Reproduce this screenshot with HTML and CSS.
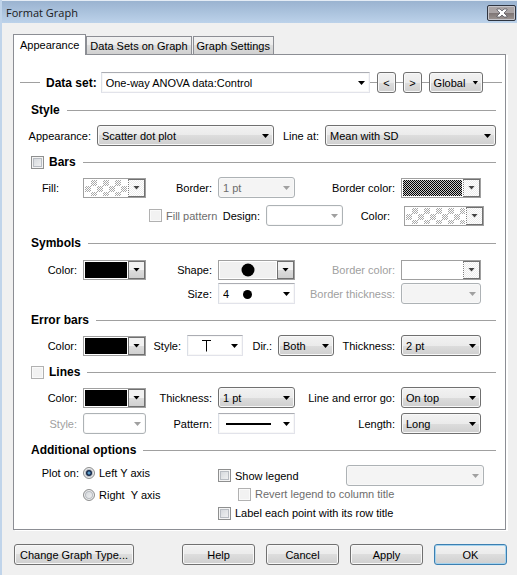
FILE: index.html
```html
<!DOCTYPE html>
<html lang="en">
<head>
    <meta charset="UTF-8">
    <meta name="viewport" content="width=device-width, initial-scale=1.0">
    <title>Format Graph</title>
    <link rel="stylesheet" href="styles.css">
</head>
<body>
    <div class="dialog">
        <div class="titlebar">
            <h1>Format Graph</h1>
            <button type="button" class="close-btn" aria-label="Close">
                <svg width="12" height="10" viewBox="0 0 12 10"><path d="M1 1h3l2 2 2-2h3v1L8 5l3 3v1H8L6 7 4 9H1V8l3-3-3-3z" fill="#fff" stroke="#4b4b55" stroke-width=".7"/></svg>
            </button>
        </div>

        <div class="tabs" role="tablist">
            <button type="button" class="tab active" role="tab" aria-selected="true">Appearance</button>
            <button type="button" class="tab" role="tab" aria-selected="false">Data Sets on Graph</button>
            <button type="button" class="tab" role="tab" aria-selected="false">Graph Settings</button>
        </div>

        <form class="panel">
            <div class="dataset-row">
                <span class="rule rule-start"></span>
                <label for="dataset" class="dataset-label">Data set:</label>
                <span class="dropdown flat dataset-box">
                    <select id="dataset"><option>One-way ANOVA data:Control</option></select>
                </span>
                <span class="rule"></span>
                <button type="button" class="btn nav-btn">&lt;</button>
                <span class="rule"></span>
                <button type="button" class="btn nav-btn">&gt;</button>
                <span class="rule"></span>
                <button type="button" class="btn global-btn">Global</button>
                <span class="rule rule-end"></span>
            </div>

            <section>
                <h2>Style</h2>
                <div class="row row-style">
                    <label for="appearance">Appearance:</label>
                    <span class="dropdown"><select id="appearance"><option>Scatter dot plot</option></select></span>
                    <label for="lineAt">Line at:</label>
                    <span class="dropdown"><select id="lineAt"><option>Mean with SD</option></select></span>
                </div>
            </section>

            <section class="bars">
                <h2><input type="checkbox" id="bars"><label for="bars">Bars</label></h2>
                <div class="row">
                    <label for="barFill" class="fill-label">Fill:</label>
                    <button type="button" id="barFill" class="swatch faded"><span class="chip checks"></span><span class="arrow"></span></button>
                    <label for="barBorder">Border:</label>
                    <span class="dropdown disabled"><select id="barBorder" disabled><option>1 pt</option></select></span>
                    <label for="barBorderColor">Border color:</label>
                    <button type="button" id="barBorderColor" class="swatch faded"><span class="chip dither"></span><span class="arrow"></span></button>
                </div>
                <div class="row row-pattern">
                    <span class="option muted"><input type="checkbox" id="fillPattern" disabled><label for="fillPattern">Fill pattern</label></span>
                    <label for="design">Design:</label>
                    <span class="dropdown disabled empty"><select id="design" disabled><option></option></select></span>
                    <label for="patternColor" class="pattern-label">Color:</label>
                    <button type="button" id="patternColor" class="swatch faded"><span class="chip checks"></span><span class="arrow"></span></button>
                </div>
            </section>

            <section class="symbols">
                <h2>Symbols</h2>
                <div class="row">
                    <label for="symbolColor">Color:</label>
                    <button type="button" id="symbolColor" class="swatch"><span class="chip black"></span><span class="arrow"></span></button>
                    <label for="symbolShape">Shape:</label>
                    <button type="button" id="symbolShape" class="swatch">
                        <span class="chip grey"><svg width="14" height="14" viewBox="0 0 14 14"><circle cx="7" cy="7" r="6.5"/></svg></span><span class="arrow"></span>
                    </button>
                    <label for="symbolBorder" class="off">Border color:</label>
                    <button type="button" id="symbolBorder" class="swatch faded" disabled><span class="chip"></span><span class="arrow"></span></button>
                </div>
                <div class="row">
                    <label for="symbolSize" class="size-label">Size:</label>
                    <span class="dropdown flat">
                        <select id="symbolSize"><option>4</option></select>
                        <svg class="sample" width="70" height="20" viewBox="0 0 70 20"><circle cx="27.500" cy="10.500" r="4.500"/></svg>
                    </span>
                    <label for="symbolThickness" class="off">Border thickness:</label>
                    <span class="dropdown disabled"><select id="symbolThickness" disabled><option></option></select></span>
                </div>
            </section>

            <section>
                <h2>Error bars</h2>
                <div class="row row-error">
                    <label for="errorColor">Color:</label>
                    <button type="button" id="errorColor" class="swatch"><span class="chip black"></span><span class="arrow"></span></button>
                    <label for="errorStyle">Style:</label>
                    <span class="dropdown flat">
                        <select id="errorStyle"><option></option></select>
                        <svg class="sample" width="40" height="20" viewBox="0 0 40 20"><path d="M13 4.5h9M17.500 4.500v11" fill="none" stroke="#000"/></svg>
                    </span>
                    <label for="errorDir">Dir.:</label>
                    <span class="dropdown"><select id="errorDir"><option>Both</option></select></span>
                    <label for="errorThickness">Thickness:</label>
                    <span class="dropdown"><select id="errorThickness"><option>2 pt</option></select></span>
                </div>
            </section>

            <section>
                <h2><input type="checkbox" id="lines" class="pale"><label for="lines">Lines</label></h2>
                <div class="row">
                    <label for="lineColor">Color:</label>
                    <button type="button" id="lineColor" class="swatch"><span class="chip black"></span><span class="arrow"></span></button>
                    <label for="lineThickness">Thickness:</label>
                    <span class="dropdown"><select id="lineThickness"><option>1 pt</option></select></span>
                    <label for="lineOrder">Line and error go:</label>
                    <span class="dropdown"><select id="lineOrder"><option>On top</option></select></span>
                </div>
                <div class="row">
                    <label for="lineStyle" class="off">Style:</label>
                    <span class="dropdown disabled empty"><select id="lineStyle" disabled><option></option></select></span>
                    <label for="linePattern">Pattern:</label>
                    <span class="dropdown flat">
                        <select id="linePattern"><option></option></select>
                        <svg class="sample" width="56" height="20" viewBox="0 0 56 20"><path d="M6 10h45" stroke="#000" stroke-width="2"/></svg>
                    </span>
                    <label for="lineLength">Length:</label>
                    <span class="dropdown"><select id="lineLength"><option>Long</option></select></span>
                </div>
            </section>

            <section>
                <h2>Additional options</h2>
                <div class="extra">
                    <div class="axis" role="radiogroup" aria-labelledby="plotOn">
                        <span id="plotOn">Plot on:</span>
                        <span class="option"><input type="radio" name="axis" id="leftAxis" checked><label for="leftAxis">Left Y axis</label></span>
                        <span class="option second"><input type="radio" name="axis" id="rightAxis"><label for="rightAxis">Right &nbsp;Y axis</label></span>
                    </div>
                    <div class="legend">
                        <div class="legend-row">
                            <span class="option"><input type="checkbox" id="showLegend"><label for="showLegend">Show legend</label></span>
                            <span class="dropdown disabled"><select disabled aria-label="Legend"><option></option></select></span>
                        </div>
                        <span class="option muted indent"><input type="checkbox" id="revert" disabled><label for="revert">Revert legend to column title</label></span>
                        <span class="option"><input type="checkbox" id="rowTitle"><label for="rowTitle">Label each point with its row title</label></span>
                    </div>
                </div>
            </section>
        </form>

        <div class="footer">
            <button type="button" class="btn wide">Change Graph Type...</button>
            <button type="button" class="btn">Help</button>
            <button type="button" class="btn">Cancel</button>
            <button type="button" class="btn">Apply</button>
            <button type="button" class="btn default">OK</button>
        </div>
    </div>
</body>
</html>
```
FILE: styles.css
```css
* {
    box-sizing: border-box;
}
body {
    margin: 0;
    background-color: #f0f0f0;
    color: #000;
    font-family: "Liberation Sans", Arial, sans-serif;
    font-size: 11px;
    line-height: 16px;
}
button, select, input {
    margin: 0;
    font: inherit;
    color: inherit;
}
label {
    white-space: nowrap;
}
.dialog {
    min-height: 100vh;
    border-left: 2px solid #c0d4ea;
}

/* Title bar */
.titlebar {
    display: flex;
    justify-content: space-between;
    align-items: center;
    height: 23px;
    padding: 1px 1px 0 4px;
    border-top: 1px solid #e4ecf5;
    background: linear-gradient(#9ab3d0, #bcd2ea);
}
.titlebar h1 {
    margin: 0;
    font: 11px/20px "Open Sans", sans-serif;
    color: #1a1a1a;
}
.close-btn {
    display: flex;
    align-items: center;
    justify-content: center;
    width: 29px;
    height: 16px;
    padding: 0;
    border: 1px solid #2e3440;
    border-radius: 2px;
    box-shadow: inset 0 0 0 1px #c5c5cb;
    background: linear-gradient(#aaa4a5 50%, #7d7474 50%, #9d9693);
}

/* Tabs */
.tabs {
    display: flex;
    align-items: flex-end;
    padding: 11px 0 0 11px;
}
.tab {
    height: 18px;
    padding: 0 3px;
    border: 1px solid #8c8e94;
    border-bottom: 0;
    background: linear-gradient(#f2f2f2, #ebebeb 50%, #ddd 50%, #d0d0d0);
    line-height: 16px;
    white-space: nowrap;
}
.tab + .tab {
    margin-left: 1px;
}
.tab.active {
    position: relative;
    height: 21px;
    margin: 0 -1px -1px 0;
    padding: 0 6px;
    background: #fff;
}
.panel {
    margin: 0 11px 0 11px;
    padding: 17px 9px 8px 17px;
    border: 1px solid #8c8e94;
    box-shadow: 2px 1px 0 #fff;
    background-color: #fff;
}

/* Data set line */
.dataset-row {
    display: flex;
    align-items: center;
    margin: 0 -6px 9px -11px;
}
.rule {
    width: 7px;
    height: 1px;
    background-color: #a0a0a0;
}
.rule-start {
    width: 20px;
    margin-right: 6px;
}
.rule-end {
    width: 19px;
}
.dataset-label {
    margin-right: 4px;
    font-size: 12px;
    font-weight: bold;
}
.dataset-box {
    flex: 1;
}

/* Sections */
h2 {
    display: flex;
    align-items: center;
    height: 16px;
    margin: 8px 0 7px;
    font-size: 12px;
    font-weight: bold;
}
h2::after {
    content: "";
    flex: 1;
    height: 1px;
    margin-left: 7px;
    background-color: #a0a0a0;
}
h2 input {
    margin-right: 5px;
}
.row {
    display: grid;
    grid-template-columns: 46fr 63fr 60fr 77fr 94fr 80fr;
    column-gap: 6px;
    align-items: center;
    min-height: 21px;
    padding-right: 15px;
    text-align: right;
}
.row > * {
    min-width: 0;
}
.row > label {
    display: flex;
    justify-content: flex-end;
}
.row + .row {
    margin-top: 5px;
}
.row-style {
    grid-template-columns: 60fr 177fr 39fr 171fr;
    padding-right: 0;
}
.row-pattern {
    grid-template-columns: 67fr 38fr 77fr 49fr 80fr;
    padding: 0 12px 0 118px;
}
.row-error {
    grid-template-columns: 46fr 63fr 29fr 56fr 23fr 56fr 55fr 80fr;
}
.bars .row + .row {
    margin-top: 7px;
}
.symbols h2 {
    margin: 9px 0 8px;
}
.symbols .row + .row {
    margin-top: 3px;
}
.size-label {
    grid-column: 3;
}
.row .fill-label {
    padding-right: 18px;
}
.row .pattern-label {
    padding-right: 8px;
}
.off {
    color: #a0a0a0;
}
.muted {
    color: #6d6d6d;
}

/* Drop-downs */
.dropdown {
    position: relative;
    display: block;
}
.dropdown::after, .arrow::after, .global-btn::after {
    content: "";
    width: 7px;
    height: 4px;
    background-color: #000;
    clip-path: polygon(0 0, 100% 0, 50% 100%);
}
.dropdown::after {
    position: absolute;
    right: 5px;
    top: 9px;
    pointer-events: none;
}
select {
    display: block;
    appearance: none;
    width: 100%;
    height: 21px;
    padding: 0 16px 0 4px;
    border: 1px solid #707070;
    border-radius: 3px;
    box-shadow: inset 0 0 0 1px #f8f8f8;
    background: linear-gradient(#f2f2f2, #ebebeb 50%, #ddd 50%, #cfcfcf);
}
.flat select {
    border-color: #abadb3 #e2e3ea #e2e3ea #dbdfe6;
    border-radius: 0;
    background: #fff;
}
.disabled select {
    border-color: #adb2b5;
    background: #f4f4f4;
    color: #6d6d6d;
    opacity: 1;
}
.empty select {
    background: #fff;
}
.disabled::after {
    background-color: #a0a0a0;
}
.sample {
    position: absolute;
    left: 2px;
    top: 1px;
    pointer-events: none;
}

/* Color pickers */
.swatch {
    display: flex;
    width: 100%;
    height: 20px;
    padding: 0;
    border: 1px solid #a0a0a0;
    background: #fff;
}
.chip {
    display: flex;
    flex: 1;
    align-items: center;
    justify-content: center;
    margin: 1px;
}
.chip.black {
    background-color: #000;
}
.chip.grey {
    background-color: #f0f0f0;
}
.chip.dither {
    background: repeating-conic-gradient(#000 0 25%, #c8c8c8 0 50%) 0 0 / 2px 2px;
}
.chip.checks {
    background:
        repeating-conic-gradient(transparent 0 25%, #fff 0 50%) 0 0 / 12px 12px,
        repeating-conic-gradient(#a8a8a8 0 25%, #fff 0 50%) 0 0 / 2px 2px;
}
.arrow {
    display: flex;
    align-items: center;
    justify-content: center;
    width: 17px;
    border: 1px solid #707070;
    background: linear-gradient(#f2f2f2 50%, #ddd 50%, #d0d0d0);
}
.faded .arrow {
    border-left: 1px dotted #808080;
    background: repeating-conic-gradient(#ececec 0 25%, #fff 0 50%) 0 0 / 2px 2px;
}
.faded .arrow::after {
    background-color: #444;
}

/* Tick boxes and radios */
input[type="checkbox"], input[type="radio"] {
    appearance: none;
    flex: none;
    width: 13px;
    height: 13px;
    border: 1px solid #8e8f8f;
    box-shadow: inset 0 0 0 1px #f4f4f4, inset 0 0 0 2px #b8bcc2;
    background: linear-gradient(135deg, #cfd3d8, #f6f6f6);
}
input[type="checkbox"]:disabled, input.pale[type="checkbox"] {
    border-color: #b1b1b1;
    box-shadow: inset 0 0 0 1px #fafafa;
    background: #f2f2f2;
}
input[type="radio"] {
    width: 12px;
    height: 12px;
    border-radius: 50%;
}
input[type="radio"]:checked {
    background: radial-gradient(circle, #5b9bc8 0 1px, #16294a 2px 3px, #e8e8e8 4px);
}
.option {
    display: flex;
    align-items: center;
    gap: 4px;
}

/* Additional options */
.extra {
    display: grid;
    grid-template-columns: 187fr 278fr;
}
.axis {
    display: grid;
    grid-template-columns: 48px 1fr;
    column-gap: 4px;
    row-gap: 5px;
    align-content: start;
    text-align: right;
}
.axis .second {
    grid-column: 2;
    margin-top: 1px;
}
.legend-row {
    display: flex;
    justify-content: space-between;
    padding-right: 12px;
}
.legend-row .dropdown {
    width: 138px;
}
.indent {
    margin: 0 0 3px 20px;
}

/* Buttons */
.btn {
    width: 73px;
    height: 21px;
    padding: 0;
    border: 1px solid #707070;
    border-radius: 3px;
    box-shadow: inset 0 0 0 1px #f8f8f8;
    background: linear-gradient(#f2f2f2, #ebebeb 50%, #ddd 50%, #cfcfcf);
    white-space: nowrap;
}
.nav-btn {
    width: 19px;
}
.global-btn {
    display: flex;
    align-items: center;
    justify-content: center;
    gap: 7px;
    width: 54px;
}
.global-btn::after {
    width: 6px;
}
.footer {
    display: flex;
    gap: 11px;
    padding: 14px 10px 9px 12px;
}
.btn.wide {
    width: 120px;
    margin-right: auto;
}
.btn.default {
    border-color: #3c7fb1;
    box-shadow: inset 0 0 0 1px #a5d3ee;
}
```
